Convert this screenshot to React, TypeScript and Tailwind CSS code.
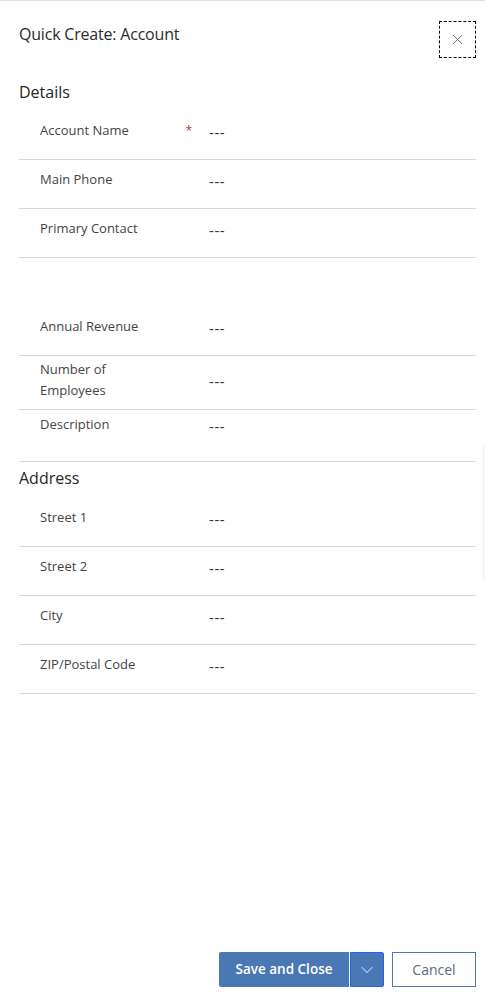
import { ChevronDown, X } from 'lucide-react';

type Field = { label: string; required?: boolean; rowClass?: string; labelClass?: string; valueClass?: string };

const details: Field[] = [
  { label: 'Account Name', required: true },
  { label: 'Main Phone' },
  { label: 'Primary Contact' },
];

const details2: Field[] = [
  { label: 'Annual Revenue' },
  { label: 'Number of Employees', rowClass: 'h-[54px] items-start', labelClass: 'pt-[3px] pr-[80px]', valueClass: 'pt-[15px]' },
  { label: 'Description', rowClass: 'h-[52px] items-start', labelClass: 'pt-[4px]', valueClass: 'pt-[6px]' },
];

const address: Field[] = [
  { label: 'Street 1' },
  { label: 'Street 2' },
  { label: 'City' },
  { label: 'ZIP/Postal Code' },
];

const FieldRow = ({ field }: { field: Field }) => (
  <div className={`flex border-b border-[#d8d8d8] ${field.rowClass ?? 'h-[49px] items-start'}`}>
    <div className={`flex w-[190px] shrink-0 pl-[21px] text-[13px] leading-[21px] text-[#444] ${field.labelClass ?? 'pt-[9px]'}`}>
      <span className="flex-1">{field.label}</span>
      {field.required && <span className="pr-[17px] text-[12px] text-[#c0392b]">*</span>}
    </div>
    <div className={`tracking-[0.6px] text-[15px] font-medium leading-[21px] text-[#333] ${field.valueClass ?? 'pt-[11px]'}`}>---</div>
  </div>
);

export default function App() {
  return (
    <div
      className="relative flex h-[999px] w-[485px] flex-col border-t border-[#e1e1e1] bg-white"
      style={{ fontFamily: '"Open Sans", "Noto Sans", sans-serif' }}
    >
      <div className="flex items-start justify-between pl-[19px] pr-[9px] pt-[20px]">
        <h1 className="pt-[1px] text-[16px] tracking-[-0.2px] leading-[24px] text-[#2b2b2b]">Quick Create: Account</h1>
        <button className="flex h-[37px] w-[37px] items-center justify-center border border-dashed border-black text-[#444]">
          <X size={17} strokeWidth={1} />
        </button>
      </div>

      <div className="px-[9px] pl-[19px]">
        <h2 className="mt-[22px] text-[16px] leading-[24px] text-[#262626]">Details</h2>
        <div className="mt-[7px]">
          {details.map((f) => (
            <FieldRow key={f.label} field={f} />
          ))}
          <div className="h-[49px]" />
          {details2.map((f) => (
            <FieldRow key={f.label} field={f} />
          ))}
        </div>

        <h2 className="mt-[4px] text-[16px] leading-[24px] text-[#262626]">Address</h2>
        <div className="mt-[8px]">
          {address.map((f) => (
            <FieldRow key={f.label} field={f} />
          ))}
        </div>
      </div>

      <div className="mt-auto flex items-center justify-end gap-[8px] pb-[12px] pr-[9px]">
        <div className="flex h-[35px]">
          <button className="h-full w-[130px] rounded-l-[2px] bg-[#4a78b5] text-[13.5px] font-semibold text-white">
            Save and Close
          </button>
          <div className="w-px bg-white" />
          <button className="flex h-full w-[34px] items-center justify-center rounded-r-[2px] border border-[#2266e3] bg-[#4a78b5] text-white">
            <ChevronDown size={20} strokeWidth={1.1} />
          </button>
        </div>
        <button className="h-[35px] w-[84px] border border-[#4a78b5] bg-white text-[14px] text-[#5a6b84]">Cancel</button>
      </div>

      <div className="absolute right-0 top-[445px] h-[135px] w-[3px] bg-[#f6f6f6]" />
    </div>
  );
}
